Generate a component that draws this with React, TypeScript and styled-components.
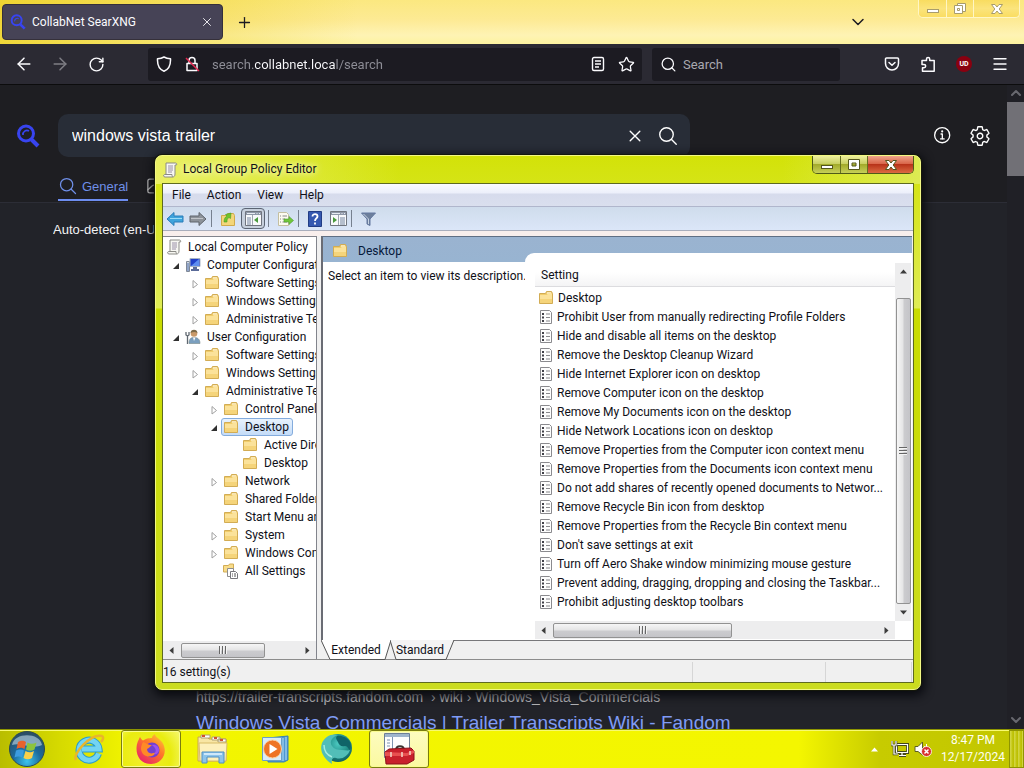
import React, { useState } from "react";
import styled, { createGlobalStyle } from "styled-components";
import {
  IoCloseOutline,
  IoImageOutline,
  IoInformationCircleOutline,
  IoSearchOutline,
  IoSettingsOutline,
} from "react-icons/io5";
import { ArrowLeft, ArrowRight, ChevronDown, ChevronUp, Menu, Plus, RotateCw, Search, Star, X } from "lucide-react";

const ui = `Roboto, "Noto Sans", sans-serif`;
const arial = `"Liberation Sans", Arial, sans-serif`;

const GlobalStyle = createGlobalStyle`
  * {
    box-sizing: border-box;
  }

  body {
    margin: 0;
    overflow: hidden;
    font-family: ${ui};
    font-size: 12px;
  }

  button, input, select {
    margin: 0;
    padding: 0;
    border: 0;
    background: none;
    color: inherit;
    font: inherit;
  }

  svg {
    display: block;
    flex: none;
  }
`;

const SCDesktop = styled.div`
  position: relative;
  display: flex;
  flex-direction: column;
  height: 100vh;
  overflow: hidden;
  background: #222428;
`;

/* Browser */

const SCTabStrip = styled.header`
  display: flex;
  align-items: flex-start;
  flex: none;
  height: 44px;
  padding: 4px 4px 0 2px;
  background:
    linear-gradient(90deg, rgba(236, 208, 30, 0.8), rgba(250, 226, 90, 0) 35%),
    linear-gradient(180deg, #fbe880 0%, #fdea94 45%, #fef3b4 80%, #fdf3a0 100%);
`;

const SCBrowserTab = styled.div`
  display: flex;
  align-items: center;
  gap: 6px;
  width: 221px;
  height: 36px;
  padding: 0 8px 0 7px;
  border: 1px solid #35303a;
  border-radius: 4px;
  background: #464356;
  color: #fbfbfe;

  span {
    flex: 1;
  }
`;

const SCIconButton = styled.button<{ $size?: number; $dim?: boolean }>`
  display: flex;
  align-items: center;
  justify-content: center;
  flex: none;
  width: ${(props) => props.$size || 16}px;
  height: ${(props) => props.$size || 16}px;
  opacity: ${(props) => (props.$dim ? 0.4 : 1)};
`;

const SCStripActions = styled.div`
  display: flex;
  align-items: center;
  flex: 1;
  justify-content: space-between;
  height: 36px;
  padding: 0 52px 0 13px;
  color: #1c1b22;
`;

const SCCaption = styled.div<{ $glass?: boolean }>`
  display: flex;
  flex: none;
  height: 18px;
  margin-top: ${(props) => (props.$glass ? "-4px" : "0")};
  border: 1px solid ${(props) => (props.$glass ? "#fff6c4" : "#4f5a18")};
  border-top: 0;
  border-radius: 0 0 5px 5px;
  overflow: hidden;
`;

const SCCaptionButton = styled.button<{ $tone: "glass" | "olive" | "red"; $wide?: boolean }>`
  display: flex;
  align-items: center;
  justify-content: center;
  width: ${(props) => (props.$wide ? 46 : 27)}px;
  border-left: 1px solid ${(props) => (props.$tone === "glass" ? "#fff6c4" : "#66701f")};
  background: ${(props) =>
    ({
      glass: "linear-gradient(#f8dc60, #fbe47c 50%, #fadd62)",
      olive: "linear-gradient(#eef09c, #c9d063 45%, #a3ab2b 50%, #c6cf58)",
      red: "linear-gradient(#efa48a, #d9674b 45%, #b8341a 50%, #dc6a42)",
    })[props.$tone]};

  &:first-child {
    border-left: 0;
  }
`;

const SCNavBar = styled.nav`
  display: grid;
  grid-template-columns: 148px minmax(200px, 494px) minmax(100px, 188px) 1fr;
  align-items: center;
  flex: none;
  height: 41px;
  border-bottom: 1px solid #0c0c0d;
  background: #2b2a33;
  color: #fbfbfe;
`;

const SCNavButtons = styled.div`
  display: flex;
  gap: 20px;
  padding-left: 16px;
`;

const SCField = styled.div<{ $spaced?: boolean }>`
  display: flex;
  align-items: center;
  gap: ${(props) => (props.$spaced ? 6 : 12)}px;
  height: 33px;
  margin-left: ${(props) => (props.$spaced ? 10 : 0)}px;
  margin-right: ${(props) => (props.$spaced ? -10 : 0)}px;
  padding: 0 8px;
  border-radius: 3px;
  background: #1c1b22;

  input {
    flex: 1;
    min-width: 0;
    height: 20px;
    outline: 0;
    font-size: 13px;
  }

  input::placeholder {
    color: #a9a9b0;
    opacity: 1;
  }
`;

const SCUrlInput = styled.input`
  background: linear-gradient(90deg, #8f8f98 43px, #fbfbfe 43px, #fbfbfe 124px, #8f8f98 124px);
  background-clip: text;
  -webkit-background-clip: text;
  -webkit-text-fill-color: transparent;
`;

const SCNavActions = styled.div`
  display: flex;
  justify-content: flex-end;
  gap: 16px;
  padding-right: 14px;
`;

const SCBlockerBadge = styled.span`
  display: grid;
  place-items: center;
  width: 16px;
  height: 16px;
  border-radius: 8px;
  background: #8a0010;
  color: #fff;
  font-size: 7px;
  font-weight: 700;
`;

const SCViewport = styled.div`
  display: flex;
  flex: 1;
  min-height: 0;
`;

const SCPage = styled.main`
  display: flex;
  flex-direction: column;
  flex: 1;
  min-width: 0;
  overflow: hidden;
  background: #222329;
  font-family: ${arial};
`;

const SCSearchHeader = styled.div`
  flex: none;
  height: 118px;
  padding: 29px 16px 0 16px;
  border-bottom: 1px solid #2c2d36;
  background: #1e1e22;
  color: #fff;
`;

const SCSearchRow = styled.div`
  display: flex;
  align-items: center;

  > button {
    margin-left: 16px;
  }
`;

const SCSearchBox = styled.div`
  display: flex;
  align-items: center;
  gap: 12px;
  flex: 1;
  max-width: 632px;
  height: 43px;
  margin-left: 18px;
  margin-right: auto;
  padding: 0 11px 0 14px;
  border-radius: 10px;
  background: #282d37;

  input {
    flex: 1;
    outline: 0;
    font-size: 16px;
  }
`;

const SCCategories = styled.div`
  display: flex;
  gap: 18px;
  padding: 16px 0 0 42px;
`;

const SCCategory = styled.a<{ $active?: boolean }>`
  display: flex;
  align-items: center;
  gap: 4px;
  height: 28px;
  border-bottom: 2px solid ${(props) => (props.$active ? "#6d8df0" : "transparent")};
  color: ${(props) => (props.$active ? "#6f8fe8" : "#bbb")};
  font-size: 13px;
  text-decoration: none;
`;

const SCLanguage = styled.select`
  align-self: flex-start;
  height: 20px;
  margin: 16px 0 0 53px;
  appearance: none;
  color: #f2f2f4;
  font-size: 13px;
`;

const SCResult = styled.article`
  margin: auto 0 -6px 196px;
  white-space: nowrap;

  cite {
    display: block;
    color: #b4b4b8;
    font-size: 14px;
    font-style: normal;
    line-height: 20px;
  }

  h3 {
    margin: 0;
    padding-top: 4px;
    font-size: 19px;
    font-weight: 400;
    line-height: 24px;
  }

  a {
    color: #7f9bf5;
    text-decoration: none;
  }
`;

const SCPageScroll = styled.div`
  display: flex;
  flex-direction: column;
  align-items: center;
  width: 17px;
  padding-bottom: 1px;
  background: #202026;
  color: #68686f;

  div {
    width: 17px;
    height: 74px;
    margin: 1px 0 auto;
    background: #717076;
  }
`;

/* Policy editor window */

const SCWindow = styled.section`
  position: absolute;
  top: 155px;
  left: 155px;
  display: flex;
  flex-direction: column;
  width: 766px;
  height: 535px;
  padding: 0 6px 6px;
  border: 1px solid #f3f884;
  border-radius: 7px;
  background:
    linear-gradient(90deg, rgba(236, 241, 110, 0.9), rgba(212, 226, 0, 0) 32%, rgba(212, 226, 0, 0) 82%, rgba(222, 236, 90, 0.9)) 0 0 / 100% 28px no-repeat,
    linear-gradient(180deg, #d3e208 0, #dfec55 152px, #c9dc00 153px, #cbdc20 100%);
  box-shadow: 0 0 0 1px #15180a, 1px 3px 10px 3px #0a0b10;
  color: #101018;
`;

const SCTitleBar = styled.header`
  display: flex;
  flex: none;
  height: 27px;
  font-size: 12px;
  text-shadow: 0 0 6px #fbfdd0, 0 0 8px #fbfdd0;

  svg {
    margin-top: 6px;
  }

  h1 {
    flex: 1;
    margin: 0;
    padding: 4px 0 0 5px;
    font-size: inherit;
    font-weight: 400;
    line-height: 18px;
  }

  button svg {
    margin: 0;
  }
`;

const SCClient = styled.div`
  display: flex;
  flex-direction: column;
  flex: 1;
  min-height: 0;
  border: 1px solid #5e6a20;
  background: #f0f0f0;
`;

const SCMenuBar = styled.nav`
  display: flex;
  flex: none;
  height: 23px;
  padding-left: 1px;
  border-bottom: 1px solid #b0b6cc;
  background: linear-gradient(180deg, #fafbff 0, #eceffa 9px, #d6dbec 10px, #dadfee 100%);

  button {
    padding: 0 8px;
  }
`;

const SCToolBar = styled.div`
  display: flex;
  align-items: center;
  gap: 3px;
  flex: none;
  height: 24px;
  padding-left: 2px;
  border-bottom: 1px solid #a9aebc;
  background: linear-gradient(180deg, #cfdcec, #dbe6f8);
`;

const SCTool = styled.button<{ $pressed?: boolean }>`
  display: grid;
  place-items: center;
  width: ${(props) => (props.$pressed ? 24 : 20)}px;
  height: 21px;
  border: ${(props) => (props.$pressed ? "1px solid #5b6473" : "0")};
  border-radius: 4px;
  background: ${(props) => (props.$pressed ? "#c6cfdc" : "none")};
`;

const SCToolDivider = styled.span`
  width: 1px;
  height: 17px;
  margin-right: 3px;
  background: #76808f;
`;

const SCPanes = styled.div`
  display: grid;
  grid-template-columns: 154px minmax(0, 1fr);
  gap: 4px;
  flex: 1;
  min-height: 0;
  padding-top: 5px;
  padding-right: 1px;
  border-bottom: 1px solid #8c8c8c;
  background: linear-gradient(#f8eeec 5px, #f0f0f0 5px);
`;

const SCTreePane = styled.div`
  display: flex;
  flex-direction: column;
  min-width: 0;
  border-top: 1px solid #82848c;
  border-right: 1px solid #82848c;
  background: #fff;
`;

const SCTree = styled.ul`
  flex: 1;
  margin: 0;
  padding: 1px 0 0;
  overflow: hidden;
  list-style: none;
`;

const SCTreeItem = styled.li<{ $level: number }>`
  display: flex;
  align-items: center;
  height: 18px;
  padding-left: ${(props) => (props.$level ? props.$level * 19 - 13 : 1)}px;
  white-space: nowrap;
`;

const SCTwisty = styled.span`
  display: grid;
  place-items: center;
  flex: none;
  width: 14px;
  height: 16px;
  padding-top: 2px;
`;

const SCTreeLabel = styled.span<{ $selected?: boolean }>`
  display: flex;
  align-items: center;
  gap: 6px;
  height: 18px;
  padding: 0 3px 0 1px;
  border: 1px solid ${(props) => (props.$selected ? "#84acdd" : "transparent")};
  border-radius: 3px;
  background: ${(props) => (props.$selected ? "linear-gradient(#e8f2fd, #c4dcf8)" : "none")};
`;

const SCScrollBar = styled.div<{ $vertical?: boolean }>`
  display: flex;
  flex-direction: ${(props) => (props.$vertical ? "column" : "row")};
  align-items: center;
  justify-content: space-between;
  flex: none;
  ${(props) => (props.$vertical ? "width: 16px; padding: 5px 0;" : "height: 18px; padding: 0 5px;")}
  background: #ededee;
`;

const SCThumb = styled.div<{ $vertical?: boolean; $length: number }>`
  display: grid;
  place-items: center;
  ${(props) =>
    props.$vertical
      ? `width: 15px; height: ${props.$length}px; margin: 23px 0 auto;`
      : `height: 15px; width: ${props.$length}px; margin: 0 auto 0 6px;`}
  border: 1px solid #929292;
  border-radius: 2px;
  background: linear-gradient(${(props) => (props.$vertical ? "90deg" : "180deg")}, #f6f6f6, #e4e4e5 48%, #cccccf 52%, #c4c4c8);
`;

const SCGrip = styled.span<{ $vertical?: boolean }>`
  width: 8px;
  height: 8px;
  background: repeating-linear-gradient(${(props) => (props.$vertical ? "180deg" : "90deg")}, #666 0, #666 1px, #f4f4f4 1px, #f4f4f4 2px, transparent 2px, transparent 3px);
`;

const SCDetails = styled.div`
  display: flex;
  flex-direction: column;
  min-width: 0;
`;

const SCDetailsBody = styled.div`
  display: flex;
  flex-direction: column;
  flex: 1;
  min-height: 0;
  border-top: 1px solid #5f6f84;
  border-left: 2px solid #6a6c74;
  background: #fff;
`;

const SCDetailsHeader = styled.div`
  display: flex;
  align-items: center;
  gap: 10px;
  flex: none;
  height: 25px;
  padding: 2px 0 0 9px;
  background: linear-gradient(#9ab3d0, #98b4d1);
  color: #06183a;

  h2 {
    margin: 0;
    font-size: inherit;
    font-weight: 400;
  }
`;

const SCExtended = styled.div`
  display: grid;
  grid-template-columns: 202px minmax(0, 1fr);
  flex: 1;
  min-height: 0;

  p {
    margin: 0;
    padding: 6px 0 0 5px;
    line-height: 16px;
    white-space: nowrap;
  }
`;

const SCListPane = styled.div`
  display: grid;
  grid-template-columns: minmax(0, 1fr) 17px;
  grid-template-rows: minmax(0, 1fr) 19px;
  margin-top: -9px;
  padding: 10px 0 0 10px;
  border-radius: 9px 0 0 0;
  background: #fff;
`;

const SCTable = styled.table`
  align-self: start;
  width: 100%;
  border-collapse: collapse;

  th {
    height: 23px;
    padding: 1px 0 0 6px;
    border-bottom: 1px solid #dcdcdf;
    background: linear-gradient(#fff 40%, #f4f4f5);
    font-weight: 400;
    text-align: left;
  }

  td {
    height: 19px;
    padding: 0 0 0 4px;
  }

  tbody tr:first-child td {
    height: 21px;
    padding: 2px 0 0 3px;
  }
`;

const SCSetting = styled.div`
  display: flex;
  align-items: center;
  gap: 4px;
  height: 18px;
  white-space: nowrap;
`;

const SCViewTabs = styled.div`
  display: flex;
  flex: none;
  height: 19px;
  border-top: 1px solid #77777a;
  background: #f0f0f0;
`;

const SCViewTab = styled.button<{ $first?: boolean }>`
  position: relative;
  width: 70px;
  margin-left: ${(props) => (props.$first ? 0 : -6)}px;
  z-index: ${(props) => (props.$first ? 1 : 0)};

  svg {
    position: absolute;
    top: -1px;
    left: 0;
  }

  span {
    position: relative;
  }
`;

const SCStatusBar = styled.footer`
  display: grid;
  grid-template-columns: 1fr 133px 86px;
  flex: none;
  height: 22px;
  padding: 2px 1px 0 0;
  line-height: 20px;

  span {
    border-right: 1px solid #d6d6d6;
  }
`;

/* Taskbar */

const SCTaskBar = styled.footer`
  display: flex;
  align-items: center;
  flex: none;
  height: 39px;
  border-top: 1px solid #8d9400;
  background: linear-gradient(90deg, #b9bd00 0, #d6da00 60px, #f2f500 130px, #f4f600 78%, #c7cb00 86%, #c2c600 100%);
  box-shadow: inset 0 1px 0 #f8fa70;
`;

const SCStart = styled.button`
  width: 59px;
  padding-left: 8px;
`;

const SCTasks = styled.div`
  display: flex;
  gap: 2px;
  flex: 1;
`;

const SCTask = styled.button<{ $state?: "open" | "active" }>`
  display: grid;
  place-items: center;
  width: 60px;
  height: 38px;
  border: 1px solid ${(props) => (props.$state ? "#7a7d10" : "transparent")};
  border-radius: 3px;
  background: ${(props) =>
    props.$state === "active"
      ? "linear-gradient(#fdfcc0, #fbf9a0)"
      : props.$state === "open"
        ? "radial-gradient(circle at 40% 70%, #f4ee30, #e9ec10 60%, #f6f870)"
        : "none"};
  box-shadow: ${(props) => (props.$state ? "inset 0 0 0 1px #fbfc90" : "none")};
`;

const SCTray = styled.div`
  display: flex;
  align-items: center;
  gap: 5px;
  color: #fffff0;

  > svg {
    margin-right: 8px;
  }
`;

const SCClock = styled.time`
  width: 72px;
  line-height: 17px;
  text-align: center;
`;

const SCShowDesktop = styled.button`
  width: 15px;
  height: 38px;
  border: 1px solid #8f9400;
  background: repeating-linear-gradient(90deg, rgba(255, 255, 255, 0.3) 0, rgba(255, 255, 255, 0.1) 2px, rgba(140, 140, 20, 0.2) 3px, transparent 4px);
`;

/* Drawings */

const SearxLogo = ({ size = 24 }: { size?: number }) => (
  <svg width={size} height={size} viewBox="0 0 24 24" fill="none" stroke="#3844f0">
    <circle cx="10" cy="9.5" r="7.5" strokeWidth="3" />
    <path d="M7 11a4 4 0 0 1 6-4" strokeWidth="1.6" />
    <path d="m15.500 15.500 6.500 6.500" strokeWidth="4" />
  </svg>
);

const ShieldIcon = () => (
  <svg width="16" height="16" viewBox="0 0 16 16" fill="none" stroke="currentColor" strokeWidth="1.500">
    <path d="M8 1c2 1.300 4.200 1.700 6.500 1.800C14.800 9 12.500 13.500 8 15.200 3.500 13.500 1.200 9 1.500 2.800 3.800 2.700 6 2.300 8 1Z" strokeLinejoin="round" />
  </svg>
);

const BrokenLockIcon = () => (
  <svg width="16" height="16" viewBox="0 0 16 16" fill="none" strokeWidth="1.500">
    <path d="M5 7V4.500a3 3 0 0 1 6 0V7M3 7.500h10v7H3z" stroke="#fbfbfe" strokeLinejoin="round" />
    <path d="m2 2 13 13" stroke="#e22850" />
  </svg>
);

const ReaderIcon = () => (
  <svg width="16" height="16" viewBox="0 0 16 16" fill="none" stroke="currentColor" strokeWidth="1.400">
    <rect x="2.500" y="1.500" width="11" height="13" rx="1.500" />
    <path d="M5 5h6M5 8h6M5 11h4" />
  </svg>
);

const PocketIcon = () => (
  <svg width="16" height="16" viewBox="0 0 16 16" fill="none" stroke="currentColor" strokeWidth="1.500" strokeLinecap="round" strokeLinejoin="round">
    <path d="M2.500 2h11a1 1 0 0 1 1 1v4.500a6.500 6.500 0 0 1-13 0V3a1 1 0 0 1 1-1Z" />
    <path d="M5 6.500 8 9.300l3-2.800" />
  </svg>
);

const ExtensionIcon = () => (
  <svg width="16" height="16" viewBox="0 0 16 16" fill="none" stroke="currentColor" strokeWidth="1.500" strokeLinejoin="round">
    <path d="M2 7.500V4.500h4.500V3a1.600 1.600 0 0 1 3.200 0v1.500h4.500v10.700H2.500v-3.400H4a1.700 1.700 0 0 0 0-3.400H2z" />
  </svg>
);

const Glyph = ({ kind, faint }: { kind: "min" | "max" | "restore" | "close"; faint?: boolean }) => (
  <svg width="14" height="12" viewBox="0 0 14 12" fill="#fff" stroke={faint ? "#a89c6c" : "#55571c"} strokeWidth="1">
    {kind === "min" && <rect x="1.500" y="6.500" width="11" height="3" />}
    {kind === "max" && <path fillRule="evenodd" d="M1.500.5h11v10h-11zM5 4h4v3H5z" />}
    {kind === "restore" && (
      <>
        <path d="M4.500.5h8v8h-8z" />
        <path fillRule="evenodd" d="M1.500 2.500h8v8h-8zM4.500 5.500h2v2h-2z" />
      </>
    )}
    {kind === "close" && <path d="M1.500 1.500h3.500L7 4l2-2.500h3.500L9.200 6l3.300 4.500H9L7 8l-2 2.500H1.500L4.800 6z" />}
  </svg>
);

const PolicyIcon = () => (
  <svg width="16" height="16" viewBox="0 0 16 16">
    <path d="M4 1h9.500c1 0 1.500 1 1 2H13v9c0 2-1 3-2.500 3H3c-1.500 0-2-2-.5-2.500H4z" fill="#f7f7f2" stroke="#8b8b86" />
    <path d="M6 4h5M6 6h5M6 8h5M6 10h4" stroke="#9a90a8" />
    <path d="M3 12.500h7c0 1.500.5 2.500 1 2.500" fill="none" stroke="#8b8b86" />
  </svg>
);

const FolderIcon = () => (
  <svg width="16" height="16" viewBox="0 0 16 16">
    <path d="M1.500 3.500h6l1-2h5l1 2v10h-13z" fill="#f1cd6b" stroke="#d2ac54" />
    <path d="M9 2.500h4v1H9z" fill="#fff" />
    <path d="M2 5h7l1-1.500h4V13H2z" fill="#fbe29a" />
    <path d="M2 9h12v4H2z" fill="#f5d47a" />
  </svg>
);

const AllSettingsIcon = () => (
  <svg width="16" height="16" viewBox="0 0 16 16">
    <path d="M.5 2.500h5l1-1.500h4v8H.5z" fill="#f8dc8a" stroke="#d2ac54" />
    <path d="M4.500 5.500h6v8h-6z" fill="#fff" stroke="#8d8d8d" />
    <path d="M7.500 8.500h5l2 2v5h-7z" fill="#fff" stroke="#77777c" />
    <path d="M9 11h1M11 11h2M9 13h1M11 13h2" stroke="#555" />
  </svg>
);

const ComputerIcon = () => (
  <svg width="16" height="16" viewBox="0 0 16 16">
    <path d="M1.500 4.500h3v10h-3z" fill="#d5dae2" stroke="#7f8896" />
    <path d="M5 1.500h10v8H5z" fill="#2040c8" stroke="#a7b4c6" />
    <path d="m6 9 8-7v7z" fill="#5d8df0" />
    <path d="M8 10h4v2h2v2H6v-2h2z" fill="#5a6a98" />
    <path d="M3 6v8" stroke="#4c70b0" />
  </svg>
);

const UserIcon = () => (
  <svg width="16" height="16" viewBox="0 0 16 16">
    <circle cx="9" cy="4.500" r="3.300" fill="#c99a6a" />
    <path d="M5.500 4c0-4.500 7-4.500 7 0-2-1.500-4.500-1.500-7 0Z" fill="#7b6a48" />
    <path d="M4 14.500c0-5 2-6 5-6s6 1 6 6z" fill="#7b9fbe" stroke="#788" strokeWidth=".6" />
    <path d="M8 8.500 9 12l1.500-3.500z" fill="#fff" />
    <path d="M1 3v3l1.500 1V15M4 3v3L2.500 7" fill="none" stroke="#606870" strokeWidth="1.300" />
  </svg>
);

const SettingIcon = () => (
  <svg width="14" height="16" viewBox="0 0 14 16">
    <path d="M1.500 1.500h9l2 2v11h-11z" fill="#fdfdfd" stroke="#8a8a8e" />
    <path d="M3 4h2v2H3zM3 7.500h2v2H3zM3 11h2v2H3z" fill="#404048" />
    <path d="M7 5h4M7 8.500h4M7 12h4" stroke="#88888c" />
  </svg>
);

const Twisty = ({ open }: { open: boolean }) => (
  <svg width="8" height="10" viewBox="0 0 8 10">
    {open ? <path d="M7 2v6H1z" fill="#303030" /> : <path d="M2 1.500 6.500 5.500 2 9z" fill="#fff" stroke="#a0a0a0" />}
  </svg>
);

const Caret = ({ turn = 0, color = "#3c3c3c" }: { turn?: number; color?: string }) => (
  <svg width="7" height="7" viewBox="0 0 7 7">
    <path d="M0 5.500 3.500 1.500 7 5.500z" fill={color} transform={`rotate(${turn} 3.500 3.500)`} />
  </svg>
);

const NavArrow = ({ back }: { back?: boolean }) => (
  <svg width="18" height="16" viewBox="0 0 18 16">
    <path
      d="M1 8 8 1.500V5h9v6H8v3.500z"
      fill={back ? "#3fa4dc" : "#8d939a"}
      stroke={back ? "#2a7db8" : "#5e646c"}
      transform={back ? undefined : "rotate(180 9 8)"}
    />
    <path d={back ? "M4 7.500h12" : "M2 7.500h12"} stroke={back ? "#9bdcf8" : "#c0c4c9"} />
  </svg>
);

const UpFolderIcon = () => (
  <svg width="16" height="16" viewBox="0 0 16 16">
    <path d="M1.500 4.500h5l1-2h6l1 2v10h-13z" fill="#f3d67a" stroke="#d0aa4c" />
    <path d="M4 11c0-3 1-5 3-6L5.500 3.500 11 2l-.5 5.500L9 6.500C7 7.500 7 9 7 11Z" fill="#6fc52a" stroke="#4c9a28" strokeWidth=".6" />
  </svg>
);

const ConsoleIcon = ({ tall }: { tall?: boolean }) => (
  <svg width="17" height="15" viewBox="0 0 17 15">
    <path d="M.5.5h16v14H.5z" fill="#f8f9fb" stroke="#70757f" />
    <path d="M1 1h15v3H1z" fill="#8f98a8" />
    <path d="M2 2.500h8M11.500 2.500h1M14 2.500h1" stroke="#e8ecf2" />
    <path d={tall ? "M3 6v6l4-3z" : "M13 6v6L9 9z"} fill="#4a9a3c" />
    <path d={tall ? "M10 7h5M10 9h5M10 11h5M10 13h5" : "M2 7h4M2 9h4M2 11h4M2 13h4"} stroke="#7585a0" />
    <path d={tall ? "M8.500 4v10" : "M7.500 4v10"} stroke="#a0a6b0" />
  </svg>
);

const ExportIcon = () => (
  <svg width="17" height="16" viewBox="0 0 17 16">
    <path d="M1.500 1.500h8l2 2v11h-10z" fill="#fcfbf0" stroke="#c4bfa0" />
    <path d="M3 5h1M5.500 5H10M3 8h1M5.500 8H8M3 11h1M5.500 11H10" stroke="#888" />
    <path d="M7 8h5V5.500l4.500 4L12 13.500V11H7z" fill="#72c83c" stroke="#4f9a34" strokeWidth=".6" />
  </svg>
);

const HelpIcon = () => (
  <svg width="14" height="16" viewBox="0 0 14 16">
    <path d="M.5.5h13v15H.5z" fill="#3558b0" stroke="#223c84" />
    <path d="M4.500 5.500c0-3.500 5.500-3 5 0C9.200 7.500 7 7.500 7 10M7 11.500v2" stroke="#fff" strokeWidth="1.800" fill="none" />
  </svg>
);

const FilterIcon = () => (
  <svg width="15" height="14" viewBox="0 0 15 14">
    <path d="M.5 1h14L9 7v6.500l-3-1.500V7z" fill="#6d7f9c" stroke="#6478a0" />
    <path d="m2.500 2 5 5v5" stroke="#c8d4e4" fill="none" />
  </svg>
);

const StartOrb = () => (
  <svg width="38" height="38" viewBox="0 0 38 38">
    <defs>
      <radialGradient id="orb" cx=".5" cy=".85" r=".8">
        <stop offset="0" stopColor="#3cc4ee" />
        <stop offset=".5" stopColor="#1c6a9c" />
        <stop offset="1" stopColor="#2b4e66" />
      </radialGradient>
    </defs>
    <circle cx="19" cy="19" r="17.500" fill="url(#orb)" stroke="#2c4a50" />
    <path d="M4 15C6 2 32 2 34 15 24 20 14 12 4 15Z" fill="#d3e6ee" opacity=".55" />
    <path d="M10 12c3-2 6-1.500 8 0l-1.500 7c-3-2-5.500-1.500-8 0z" fill="#e8622c" />
    <path d="M19.500 12.500c3 2 6 1.500 9 0l-2 7c-3 2-6 1.500-8.500 0z" fill="#8cc43c" />
    <path d="M8 20.500c3-1.500 6-1.500 8 0l-2 7c-2-1.500-5-1.500-7.500 0z" fill="#3c9ce0" />
    <path d="M17.500 21c3 2 6 1.500 8.500 0l-2 7c-3 2-6 1.500-8.500 0z" fill="#fbd04a" />
  </svg>
);

const ExplorerLogo = () => (
  <svg width="32" height="32" viewBox="0 0 32 32" fill="none">
    <path d="M25.500 20.500A10 10 0 1 1 26 16H9" stroke="#2a9ccc" strokeWidth="7" />
    <path d="M25.500 20.500A10 10 0 1 1 26 16H9" stroke="#73d4f2" strokeWidth="5" />
    <path d="M3 27C-1 21 18 0 29 3c2 1 1 4-1 6" stroke="#e9b52c" strokeWidth="2.500" />
  </svg>
);

const FirefoxLogo = () => (
  <svg width="32" height="32" viewBox="0 0 32 32">
    <defs>
      <linearGradient id="fox" x1="1" y1="0" x2=".2" y2="1">
        <stop offset="0" stopColor="#ffd83a" />
        <stop offset=".45" stopColor="#ff7a28" />
        <stop offset="1" stopColor="#e8206c" />
      </linearGradient>
    </defs>
    <path d="M3 8c1-1 1-3 2-4 1 2 2 3 3 3.500C12 5 16 5 17 5c0-1 1-3 3-4 0 3 4 4 7 8 7 10 0 22-11 22C3 31-1 18 3 8Z" fill="url(#fox)" />
    <circle cx="17" cy="17" r="7.500" fill="#7440d0" />
    <path d="M8 9c4 1 4 3 9 3-2 1-2 3-5 4 0 4 4 6 9 3-3 7-14 6-15-3 0-3 1-5 2-7Z" fill="#ff8a26" />
    <path d="M17 12c4-1 7 2 7 5s-3 5-5 4c3-3 2-6-2-9Z" fill="#9c52f0" />
  </svg>
);

const FilesLogo = () => (
  <svg width="34" height="32" viewBox="0 0 34 32">
    <path d="M2 4h9l2 2h17v22H2z" fill="#f8e6a4" stroke="#c8a850" />
    <path d="M5 2h9v3H5zM16 4h8v3h-8zM22 6h8v3h-8z" fill="#fff" stroke="#b0a070" />
    <path d="M6 3h3M18 5h3M24 7h3" stroke="#d05030" strokeWidth="2" />
    <path d="M3 10h28l-1 18H4z" fill="#fdf0bc" stroke="#d8bc68" />
    <path d="M6 30V19h22v11h-5v-6H11v6z" fill="#8cc4ea" stroke="#4e8fc4" />
    <path d="M8 21h18" stroke="#e4f4ff" strokeWidth="1.500" />
  </svg>
);

const MediaLogo = () => (
  <svg width="28" height="28" viewBox="0 0 28 28">
    <path d="m7 3 20-2v24l-4 2H7z" fill="#4e98d0" stroke="#3880b4" />
    <path d="M22 3v23M25 2v23" stroke="#b8e0f8" />
    <path d="M1.500 2.500h19v23h-19z" fill="#d8ecf8" stroke="#68a0c8" />
    <circle cx="11.500" cy="14" r="9" fill="#ee7424" stroke="#fbd0a0" />
    <path d="m8.500 9 8 5-8 5z" fill="#fff" />
  </svg>
);

const GlobeLogo = () => (
  <svg width="34" height="32" viewBox="0 0 34 32">
    <defs>
      <radialGradient id="globe" cx=".5" cy=".35" r=".7">
        <stop offset="0" stopColor="#4cc8c0" />
        <stop offset=".55" stopColor="#208e88" />
        <stop offset="1" stopColor="#105858" />
      </radialGradient>
    </defs>
    <circle cx="18" cy="15" r="14" fill="url(#globe)" />
    <path d="M17 3c4-1 10 1 13 6 1 3 1 6 0 8-2-1-2-4-5-4-4 1-6-1-7-4-1-2-3-4-1-6Z" fill="#0f6468" />
    <path d="M2 10C5 3 12 0 18 2c-6 2-9 7-6 11 2 3 6 4 10 4 3 0 6 1 8 0-2 6-8 10-14 8-3-1-5 1-4 6C4 26-1 18 2 10Z" fill="#52beb8" />
    <path d="M4 12c0 7 3 10 8 12" fill="none" stroke="#a4ece0" strokeWidth="1.500" />
  </svg>
);

const ToolboxLogo = () => (
  <svg width="32" height="34" viewBox="0 0 32 34">
    <path d="M1.500 1.500h25v24h-25z" fill="#fdfdfd" stroke="#6d7f96" />
    <path d="M2 2h24v3H2z" fill="#9fb4cc" />
    <path d="M9.500 5v12M4 8h3M4 11h3M4 14h3" stroke="#7d93b0" />
    <path d="M13 18c0-5 8-5 8 0" fill="none" stroke="#3c3434" strokeWidth="2" />
    <path d="m2 20 4-3 22-1 3 3v9l-7 4H3z" fill="#c8202c" stroke="#8c1018" />
    <path d="m2 20 22 1 7-3v3l-7 3H2z" fill="#e85050" />
    <path d="M8 20v5M19 20v5M27 19v4" stroke="#f4d8c8" strokeWidth="1.500" />
  </svg>
);

const NetworkIcon = () => (
  <svg width="18" height="18" viewBox="0 0 18 18" fill="none">
    <path d="M5.500 4.500h11v8h-11zM8 15.500h7M11 13v2" stroke="#45481c" strokeWidth="3" />
    <path d="M5.500 4.500h11v8h-11zM8 15.500h7M11 13v2" stroke="#fff" strokeWidth="1.200" />
    <path d="M1 1v4h4V1M3 5v9h4" stroke="#45481c" strokeWidth="2.500" />
    <path d="M1 1v4h4V1M3 5v9h4" stroke="#fff" strokeWidth="1.200" />
  </svg>
);

const MutedIcon = () => (
  <svg width="18" height="16" viewBox="0 0 18 16">
    <path d="M1 5.500h3L8.500 1v13L4 10.500H1z" fill="#fff" stroke="#5c5e28" />
    <path d="M10.500 5v5M12.500 3v4" stroke="#fff" />
    <circle cx="12.500" cy="10.500" r="5" fill="#d83030" stroke="#fff" strokeWidth=".8" />
    <path d="m10.500 8.500 4 4m0-4-4 4" stroke="#fff" strokeWidth="1.500" />
  </svg>
);

const treeIcons = {
  policy: <PolicyIcon />,
  computer: <ComputerIcon />,
  user: <UserIcon />,
  folder: <FolderIcon />,
  all: <AllSettingsIcon />,
};

type TreeNode = { label: string; level: number; icon?: keyof typeof treeIcons; open?: boolean };

const tree: TreeNode[] = [
  { label: "Local Computer Policy", level: 0, icon: "policy" },
  { label: "Computer Configuration", level: 1, icon: "computer", open: true },
  { label: "Software Settings", level: 2, open: false },
  { label: "Windows Settings", level: 2, open: false },
  { label: "Administrative Templates", level: 2, open: false },
  { label: "User Configuration", level: 1, icon: "user", open: true },
  { label: "Software Settings", level: 2, open: false },
  { label: "Windows Settings", level: 2, open: false },
  { label: "Administrative Templates", level: 2, open: true },
  { label: "Control Panel", level: 3, open: false },
  { label: "Desktop", level: 3, open: true },
  { label: "Active Directory", level: 4 },
  { label: "Desktop", level: 4 },
  { label: "Network", level: 3, open: false },
  { label: "Shared Folders", level: 3 },
  { label: "Start Menu and Taskbar", level: 3 },
  { label: "System", level: 3, open: false },
  { label: "Windows Components", level: 3, open: false },
  { label: "All Settings", level: 3, icon: "all" },
];

const settings = [
  "Prohibit User from manually redirecting Profile Folders",
  "Hide and disable all items on the desktop",
  "Remove the Desktop Cleanup Wizard",
  "Hide Internet Explorer icon on desktop",
  "Remove Computer icon on the desktop",
  "Remove My Documents icon on the desktop",
  "Hide Network Locations icon on desktop",
  "Remove Properties from the Computer icon context menu",
  "Remove Properties from the Documents icon context menu",
  "Do not add shares of recently opened documents to Networ...",
  "Remove Recycle Bin icon from desktop",
  "Remove Properties from the Recycle Bin context menu",
  "Don't save settings at exit",
  "Turn off Aero Shake window minimizing mouse gesture",
  "Prevent adding, dragging, dropping and closing the Taskbar...",
  "Prohibit adjusting desktop toolbars",
];

function Browser() {
  const [query, setQuery] = useState("windows vista trailer");
  return (
    <>
      <SCTabStrip>
        <SCBrowserTab>
          <SearxLogo size={16} />
          <span>CollabNet SearXNG</span>
          <SCIconButton aria-label="Close tab" $size={14}>
            <X size={14} strokeWidth={1.5} />
          </SCIconButton>
        </SCBrowserTab>
        <SCStripActions>
          <SCIconButton aria-label="New tab">
            <Plus size={17} strokeWidth={1.8} />
          </SCIconButton>
          <SCIconButton aria-label="List all tabs">
            <ChevronDown size={20} strokeWidth={1.8} />
          </SCIconButton>
        </SCStripActions>
        <SCCaption $glass>
          <SCCaptionButton $tone="glass" aria-label="Minimize"><Glyph kind="min" faint /></SCCaptionButton>
          <SCCaptionButton $tone="glass" aria-label="Restore"><Glyph kind="restore" faint /></SCCaptionButton>
          <SCCaptionButton $tone="glass" $wide aria-label="Close"><Glyph kind="close" faint /></SCCaptionButton>
        </SCCaption>
      </SCTabStrip>
      <SCNavBar>
        <SCNavButtons>
          <SCIconButton aria-label="Back"><ArrowLeft size={20} strokeWidth={1.8} /></SCIconButton>
          <SCIconButton aria-label="Forward" $dim><ArrowRight size={20} strokeWidth={1.8} /></SCIconButton>
          <SCIconButton aria-label="Reload"><RotateCw size={17} strokeWidth={2} /></SCIconButton>
        </SCNavButtons>
        <SCField>
          <ShieldIcon />
          <BrokenLockIcon />
          <SCUrlInput aria-label="Address" defaultValue="search.collabnet.local/search" />
          <ReaderIcon />
          <SCIconButton aria-label="Bookmark"><Star size={17} strokeWidth={1.8} /></SCIconButton>
        </SCField>
        <SCField $spaced>
          <Search size={17} strokeWidth={1.8} />
          <input aria-label="Search the web" placeholder="Search" />
        </SCField>
        <SCNavActions>
          <SCIconButton aria-label="Pocket" $size={20}><PocketIcon /></SCIconButton>
          <SCIconButton aria-label="Extensions" $size={20}><ExtensionIcon /></SCIconButton>
          <SCIconButton aria-label="Blocker" $size={20}><SCBlockerBadge>UD</SCBlockerBadge></SCIconButton>
          <SCIconButton aria-label="Menu" $size={20}><Menu size={18} strokeWidth={1.8} /></SCIconButton>
        </SCNavActions>
      </SCNavBar>
      <SCViewport>
        <SCPage>
          <SCSearchHeader>
            <SCSearchRow>
              <SearxLogo />
              <SCSearchBox>
                <input aria-label="Query" value={query} onChange={(e) => setQuery(e.target.value)} />
                <SCIconButton aria-label="Clear" $size={20} onClick={() => setQuery("")}><IoCloseOutline size={22} /></SCIconButton>
                <SCIconButton aria-label="Submit" $size={22}><IoSearchOutline size={22} /></SCIconButton>
              </SCSearchBox>
              <SCIconButton aria-label="About" $size={22}><IoInformationCircleOutline size={21} /></SCIconButton>
              <SCIconButton aria-label="Preferences" $size={22}><IoSettingsOutline size={22} /></SCIconButton>
            </SCSearchRow>
            <SCCategories>
              <SCCategory href="#general" $active><IoSearchOutline size={20} />General</SCCategory>
              <SCCategory href="#images" aria-label="Images"><IoImageOutline size={20} /></SCCategory>
            </SCCategories>
          </SCSearchHeader>
          <SCLanguage aria-label="Language">
            <option>Auto-detect (en-US)</option>
          </SCLanguage>
          <SCResult>
            <cite>https://trailer-transcripts.fandom.com &nbsp;› wiki › Windows_Vista_Commercials</cite>
            <h3><a href="#result">Windows Vista Commercials | Trailer Transcripts Wiki - Fandom</a></h3>
          </SCResult>
        </SCPage>
        <SCPageScroll>
          <ChevronUp size={16} strokeWidth={3} />
          <div />
          <ChevronDown size={16} strokeWidth={3} />
        </SCPageScroll>
      </SCViewport>
    </>
  );
}

function PolicyEditor() {
  return (
    <SCWindow>
      <SCTitleBar>
        <PolicyIcon />
        <h1>Local Group Policy Editor</h1>
        <SCCaption>
          <SCCaptionButton $tone="olive" aria-label="Minimize"><Glyph kind="min" /></SCCaptionButton>
          <SCCaptionButton $tone="olive" aria-label="Maximize"><Glyph kind="max" /></SCCaptionButton>
          <SCCaptionButton $tone="red" $wide aria-label="Close"><Glyph kind="close" /></SCCaptionButton>
        </SCCaption>
      </SCTitleBar>
      <SCClient>
        <SCMenuBar>
          {["File", "Action", "View", "Help"].map((item) => (
            <button key={item}>{item}</button>
          ))}
        </SCMenuBar>
        <SCToolBar>
          <SCTool aria-label="Back"><NavArrow back /></SCTool>
          <SCTool aria-label="Forward"><NavArrow /></SCTool>
          <SCToolDivider />
          <SCTool aria-label="Up one level"><UpFolderIcon /></SCTool>
          <SCTool $pressed aria-label="Show console tree"><ConsoleIcon /></SCTool>
          <SCToolDivider />
          <SCTool aria-label="Export list"><ExportIcon /></SCTool>
          <SCToolDivider />
          <SCTool aria-label="Help"><HelpIcon /></SCTool>
          <SCTool aria-label="Show action pane"><ConsoleIcon tall /></SCTool>
          <SCToolDivider />
          <SCTool aria-label="Filter"><FilterIcon /></SCTool>
        </SCToolBar>
        <SCPanes>
          <SCTreePane>
            <SCTree>
              {tree.map((node, i) => (
                <SCTreeItem key={i} $level={node.level}>
                  {node.level > 0 && <SCTwisty>{node.open !== undefined && <Twisty open={node.open} />}</SCTwisty>}
                  <SCTreeLabel $selected={node.level === 3 && node.label === "Desktop"}>
                    {treeIcons[node.icon || "folder"]}
                    {node.label}
                  </SCTreeLabel>
                </SCTreeItem>
              ))}
            </SCTree>
            <SCScrollBar>
              <Caret turn={-90} />
              <SCThumb $length={84}><SCGrip /></SCThumb>
              <Caret turn={90} />
            </SCScrollBar>
          </SCTreePane>
          <SCDetails>
            <SCDetailsBody>
              <SCDetailsHeader>
                <FolderIcon />
                <h2>Desktop</h2>
              </SCDetailsHeader>
              <SCExtended>
                <p>Select an item to view its description.</p>
                <SCListPane>
                  <SCTable>
                    <thead>
                      <tr><th>Setting</th></tr>
                    </thead>
                    <tbody>
                      <tr>
                        <td><SCSetting><FolderIcon />Desktop</SCSetting></td>
                      </tr>
                      {settings.map((name) => (
                        <tr key={name}>
                          <td><SCSetting><SettingIcon />{name}</SCSetting></td>
                        </tr>
                      ))}
                    </tbody>
                  </SCTable>
                  <SCScrollBar $vertical>
                    <Caret />
                    <SCThumb $vertical $length={306}><SCGrip $vertical /></SCThumb>
                    <Caret turn={180} />
                  </SCScrollBar>
                  <SCScrollBar>
                    <Caret turn={-90} />
                    <SCThumb $length={179}><SCGrip /></SCThumb>
                    <Caret turn={90} />
                  </SCScrollBar>
                </SCListPane>
              </SCExtended>
            </SCDetailsBody>
            <SCViewTabs>
              <SCViewTab $first>
                <svg width="70" height="20" viewBox="0 0 70 20">
                  <path d="M0 0 9 19.500H64L70 0" fill="#fff" stroke="#555" />
                </svg>
                <span>Extended</span>
              </SCViewTab>
              <SCViewTab>
                <svg width="70" height="20" viewBox="0 0 70 20">
                  <path d="M5 0 11 19.500H61L69 0" fill="#f4f4f4" stroke="#555" />
                </svg>
                <span>Standard</span>
              </SCViewTab>
            </SCViewTabs>
          </SCDetails>
        </SCPanes>
        <SCStatusBar>
          <span>16 setting(s)</span>
          <span />
          <span />
        </SCStatusBar>
      </SCClient>
    </SCWindow>
  );
}

function TaskBar() {
  return (
    <SCTaskBar>
      <SCStart aria-label="Start"><StartOrb /></SCStart>
      <SCTasks>
        <SCTask aria-label="Internet Explorer"><ExplorerLogo /></SCTask>
        <SCTask aria-label="Firefox" $state="open"><FirefoxLogo /></SCTask>
        <SCTask aria-label="Files"><FilesLogo /></SCTask>
        <SCTask aria-label="Media player"><MediaLogo /></SCTask>
        <SCTask aria-label="Web browser"><GlobeLogo /></SCTask>
        <SCTask aria-label="Policy editor" $state="active"><ToolboxLogo /></SCTask>
      </SCTasks>
      <SCTray>
        <Caret color="#fff" />
        <SCIconButton aria-label="Network" $size={18}><NetworkIcon /></SCIconButton>
        <SCIconButton aria-label="Volume" $size={18}><MutedIcon /></SCIconButton>
        <SCClock>8:47 PM<br />12/17/2024</SCClock>
      </SCTray>
      <SCShowDesktop aria-label="Show desktop" />
    </SCTaskBar>
  );
}

export default function App() {
  return (
    <SCDesktop>
      <GlobalStyle />
      <Browser />
      <PolicyEditor />
      <TaskBar />
    </SCDesktop>
  );
}
